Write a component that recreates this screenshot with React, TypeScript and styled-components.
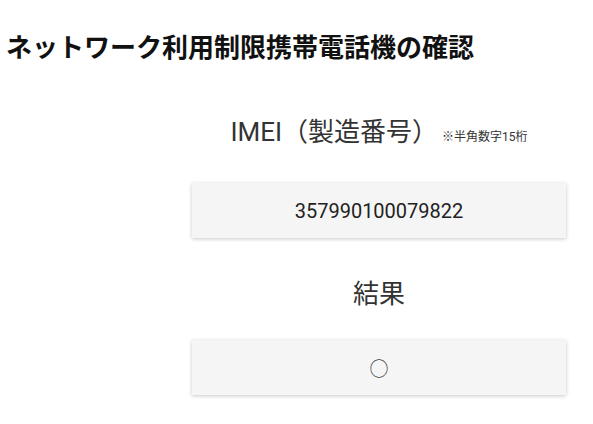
import React from 'react';
import styled, { createGlobalStyle } from 'styled-components';

const GlobalStyle = createGlobalStyle`
  html, body {
    margin: 0;
    padding: 0;
    background: #ffffff;
  }
  body {
    font-family: Roboto, "Noto Sans CJK JP", sans-serif;
    color: #333333;
  }
`;

const Page = styled.main`
  width: 593px;
  min-height: 424px;
  box-sizing: border-box;
  padding-top: 29px;
`;

const Title = styled.h1`
  margin: 0 0 0 6px;
  font-family: "Noto Sans CJK JP", sans-serif;
  font-size: 26px;
  line-height: 34px;
  font-weight: 700;
  color: #111111;
  white-space: nowrap;
`;

const Form = styled.section`
  display: grid;
  grid-template-columns: 192px 374px;
`;

const Column = styled.div`
  grid-column: 2;
  display: flex;
  flex-direction: column;
  align-items: stretch;
`;

const Label = styled.div<{ $top: number; $bottom: number }>`
  margin: ${(p) => p.$top}px 0 ${(p) => p.$bottom}px;
  display: flex;
  justify-content: center;
  align-items: baseline;
  gap: 4px;
  font-family: Roboto, "Noto Sans CJK JP", sans-serif;
  font-size: 26px;
  line-height: 31px;
  color: #333333;
  white-space: nowrap;
`;

const Note = styled.span`
  font-family: Roboto, "Noto Sans CJK JP", sans-serif;
  font-size: 12px;
  line-height: 14px;
  color: #333333;
`;

const Field = styled.div`
  height: 55px;
  display: flex;
  align-items: center;
  justify-content: center;
  background: #f5f5f5;
  box-shadow: 0 1px 4px rgba(0, 0, 0, 0.22);
  font-family: Roboto, "Noto Sans CJK JP", sans-serif;
  font-size: 20px;
  color: #222222;
`;

const Mark = styled.span`
  font-family: "Noto Sans CJK JP", sans-serif;
  font-size: 19px;
  line-height: 1;
  color: #444444;
`;

export default function App() {
  return (
    <Page>
      <GlobalStyle />
      <Title>ネットワーク利用制限携帯電話機の確認</Title>
      <Form>
        <Column>
          <Label $top={54} $bottom={35}>
            <span>IMEI（製造番号）</span>
            <Note>※半角数字15桁</Note>
          </Label>
          <Field>357990100079822</Field>
          <Label $top={41} $bottom={30}>
            <span>結果</span>
          </Label>
          <Field>
            <Mark>○</Mark>
          </Field>
        </Column>
      </Form>
    </Page>
  );
}
